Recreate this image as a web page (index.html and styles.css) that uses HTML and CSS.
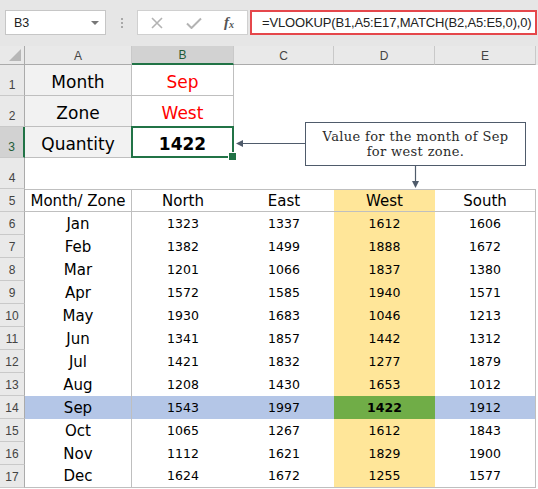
FILE: index.html
```html
<!DOCTYPE html>
<html>
<head>
<meta charset="utf-8">
<link rel="stylesheet" href="styles.css">
</head>
<body>
<div class="app">
  <div class="fbar">
    <div class="namebox"><span class="nb-text">B3</span><span class="nb-caret"></span></div>
    <div class="dots"><i></i><i></i><i></i></div>
    <div class="btns">
      <svg class="ico x" width="12" height="12" viewBox="0 0 12 12"><path d="M1 1L11 11M11 1L1 11" stroke="#b3b3b3" stroke-width="1.6" fill="none"/></svg>
      <svg class="ico ok" width="16" height="12" viewBox="0 0 16 12"><path d="M1 6.5L5.5 11L15 1.5" stroke="#b3b3b3" stroke-width="2" fill="none"/></svg>
      <span class="fx"><i>f</i><sub>x</sub></span>
    </div>
    <div class="formula">=VLOOKUP(B1,A5:E17,MATCH(B2,A5:E5,0),0)</div>
  </div>

  <div class="sheet">
    <div class="corner"></div>
    <div class="ch">A</div><div class="ch sel">B</div><div class="ch">C</div><div class="ch">D</div><div class="ch">E</div>

    <div class="rh">1</div><div class="c big box shade">Month</div><div class="c big box red">Sep</div><div class="c"></div><div class="c"></div><div class="c"></div>
    <div class="rh">2</div><div class="c big box shade">Zone</div><div class="c big box red">West</div><div class="c"></div><div class="c"></div><div class="c"></div>
    <div class="rh sel">3</div><div class="c big box shade">Quantity</div><div class="c big box bold active">1422</div><div class="c"></div><div class="c"></div><div class="c"></div>
    <div class="rh">4</div><div class="c"></div><div class="c"></div><div class="c"></div><div class="c"></div><div class="c"></div>

    <div class="rh">5</div><div class="c t hd ra">Month/ Zone</div><div class="c t hd">North</div><div class="c t hd">East</div><div class="c t hd yel">West</div><div class="c t hd re">South</div>

    <div class="rh">6</div><div class="c t ra">Jan</div><div class="c n">1323</div><div class="c n">1337</div><div class="c n yel">1612</div><div class="c n re">1606</div>
    <div class="rh">7</div><div class="c t ra">Feb</div><div class="c n">1382</div><div class="c n">1499</div><div class="c n yel">1888</div><div class="c n re">1672</div>
    <div class="rh">8</div><div class="c t ra">Mar</div><div class="c n">1201</div><div class="c n">1066</div><div class="c n yel">1837</div><div class="c n re">1380</div>
    <div class="rh">9</div><div class="c t ra">Apr</div><div class="c n">1572</div><div class="c n">1585</div><div class="c n yel">1940</div><div class="c n re">1571</div>
    <div class="rh">10</div><div class="c t ra">May</div><div class="c n">1930</div><div class="c n">1683</div><div class="c n yel">1046</div><div class="c n re">1213</div>
    <div class="rh">11</div><div class="c t ra">Jun</div><div class="c n">1341</div><div class="c n">1857</div><div class="c n yel">1442</div><div class="c n re">1312</div>
    <div class="rh">12</div><div class="c t ra">Jul</div><div class="c n">1421</div><div class="c n">1832</div><div class="c n yel">1277</div><div class="c n re">1879</div>
    <div class="rh">13</div><div class="c t ra">Aug</div><div class="c n">1208</div><div class="c n">1430</div><div class="c n yel">1653</div><div class="c n re">1012</div>
    <div class="rh">14</div><div class="c t ra blu">Sep</div><div class="c n blu">1543</div><div class="c n blu">1997</div><div class="c n grn bold">1422</div><div class="c n re blu">1912</div>
    <div class="rh">15</div><div class="c t ra">Oct</div><div class="c n">1065</div><div class="c n">1267</div><div class="c n yel">1612</div><div class="c n re">1843</div>
    <div class="rh">16</div><div class="c t ra">Nov</div><div class="c n">1112</div><div class="c n">1621</div><div class="c n yel">1829</div><div class="c n re">1900</div>
    <div class="rh">17</div><div class="c t ra last">Dec</div><div class="c n last">1624</div><div class="c n last">1672</div><div class="c n yel last">1255</div><div class="c n re last">1577</div>
  </div>

  <div class="note">Value for the month of Sep<br>for west zone.</div>
  <svg class="arrows" width="538" height="489" viewBox="0 0 538 489">
    <path d="M305 143.5H242" stroke="#4f5b6b" stroke-width="1.2" fill="none"/>
    <polygon points="236,143.5 243,140 243,147" fill="#4f5b6b"/>
    <path d="M415.5 166V181" stroke="#4f5b6b" stroke-width="1.2" fill="none"/>
    <polygon points="412,181 419,181 415.5,188" fill="#4f5b6b"/>
  </svg>
</div>
</body>
</html>
```

FILE: styles.css
```css
* { box-sizing: border-box; }
html, body { margin: 0; padding: 0; background: #fff; }
.app {
  position: relative;
  width: 538px;
  height: 489px;
  overflow: hidden;
  font-family: "Liberation Sans", Arial, sans-serif;
}

/* formula bar */
.fbar {
  height: 46px;
  background: #e6e6e6;
  display: flex;
  align-items: flex-start;
  padding: 10px 0 0 5px;
}
.namebox {
  width: 101px;
  height: 25px;
  background: #fff;
  border: 1px solid #c6c6c6;
  display: flex;
  align-items: center;
  justify-content: space-between;
  padding: 0 6px 0 8px;
}
.nb-text { font-size: 12.5px; color: #222; }
.nb-caret {
  width: 0; height: 0;
  border-left: 4px solid transparent;
  border-right: 4px solid transparent;
  border-top: 4px solid #777;
}
.dots {
  width: 31px;
  height: 25px;
  display: flex;
  flex-direction: column;
  align-items: center;
  justify-content: center;
  gap: 2px;
}
.dots i { display: block; width: 2px; height: 2px; background: #a8a8a8; }
.btns {
  width: 111px;
  height: 25px;
  background: #fff;
  border: 1px solid #d0d0d0;
  display: flex;
  align-items: center;
  padding-left: 13px;
}
.ico.x { margin-right: 23px; }
.ico.ok { margin-right: 22px; }
.fx {
  font-family: "Liberation Serif", "DejaVu Serif", serif;
  font-size: 15px;
  color: #555;
  font-weight: bold;
  line-height: 1;
}
.fx sub { font-size: 10px; vertical-align: -1px; font-style: italic; }
.formula {
  margin-left: 2px;
  width: 287px;
  height: 25px;
  border: 2px solid #e5474b;
  background: #fff;
  font-size: 13px;
  letter-spacing: -0.15px;
  color: #222;
  padding-left: 10px;
  display: flex;
  align-items: center;
  white-space: nowrap;
}

/* sheet grid */
.sheet {
  display: grid;
  grid-template-columns: 25px 107px 102px 100px 101px 101px;
  grid-template-rows: 19px repeat(4, 31px) repeat(13, 23px);
  background: linear-gradient(#e9e9e9 0 19px, #fff 19px);
}
.corner {
  position: relative;
  background: #e9e9e9;
  border-right: 1px solid #ababab;
  border-bottom: 1px solid #ababab;
}
.corner::after {
  content: "";
  position: absolute;
  right: 3px;
  bottom: 3px;
  width: 0; height: 0;
  border-left: 12px solid transparent;
  border-bottom: 12px solid #b7b7b7;
}
.ch {
  background: #e9e9e9;
  border-right: 1px solid #c9c9c9;
  border-bottom: 1px solid #ababab;
  display: flex;
  align-items: center;
  justify-content: center;
  font-size: 12px;
  color: #444;
  padding-top: 1px;
}
.ch.sel {
  background: #d2d2d2;
  border-bottom: 2px solid #217346;
  color: #1e5c38;
}
.rh {
  background: #e9e9e9;
  border-right: 1px solid #ababab;
  border-bottom: 1px solid #c9c9c9;
  display: flex;
  align-items: flex-end;
  justify-content: center;
  font-size: 12px;
  color: #444;
  padding-bottom: 3px;
}
.rh.sel {
  background: #d2d2d2;
  border-right: 2px solid #217346;
  color: #1e5c38;
}

.c {
  display: flex;
  align-items: flex-end;
  justify-content: center;
  font-family: "DejaVu Sans", Verdana, sans-serif;
  color: #000;
  white-space: nowrap;
}
.big { font-size: 17px; line-height: 20px; padding-bottom: 3px; }
.box { border-right: 1px solid #bfbfbf; border-bottom: 1px solid #bfbfbf; }
.shade { background: #f2f2f2; }
.red { color: #ff0000; }
.bold { font-weight: bold; }
.active { position: relative; }
.active::after {
  content: "";
  position: absolute;
  left: -1px; top: -1px; right: -1px; bottom: -1px;
  border: 2px solid #217346;
}
.active::before {
  content: "";
  position: absolute;
  right: -4px;
  bottom: -4px;
  width: 7px;
  height: 7px;
  background: #217346;
  border: 1px solid #fff;
  z-index: 2;
}

.t { font-size: 15px; line-height: 18px; padding-bottom: 2px; }
.n { font-size: 12.5px; line-height: 16px; padding-bottom: 3px; }
.hd { border-top: 1px solid #bfbfbf; border-bottom: 1px solid #bfbfbf; padding-bottom: 1px; }
.ra { border-right: 1px solid #bfbfbf; }
.re { border-right: 1px solid #bfbfbf; }
.last { border-bottom: 1px solid #bfbfbf; }
.yel { background: #ffe699; }
.blu { background: #b4c6e7; }
.grn { background: #70ad47; }

/* annotation */
.note {
  position: absolute;
  left: 305px;
  top: 122px;
  width: 221px;
  height: 44px;
  background: #fff;
  border: 1.5px solid #4f5b6b;
  font-family: "DejaVu Serif", "Liberation Serif", serif;
  font-size: 13px;
  letter-spacing: 0.35px;
  line-height: 15px;
  color: #2b2b2b;
  text-align: center;
  padding-top: 6px;
}
.arrows {
  position: absolute;
  left: 0;
  top: 0;
  pointer-events: none;
}
```
